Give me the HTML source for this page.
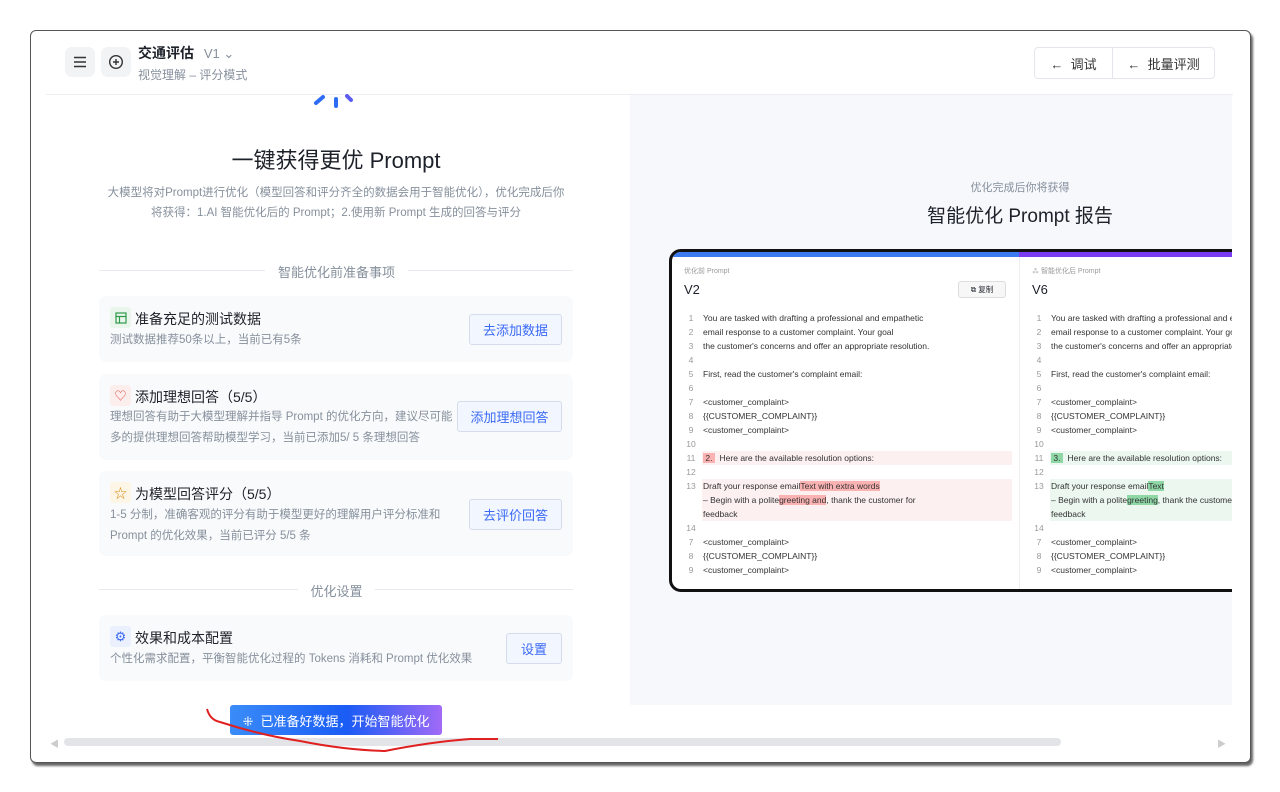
<!DOCTYPE html>
<html><head><meta charset="utf-8"><style>
*{box-sizing:border-box;margin:0;padding:0}
body{width:1280px;height:792px;background:#fff;position:relative;overflow:hidden;font-family:"Liberation Sans","Noto Sans CJK SC",sans-serif;color:#1d2129}
.abs{position:absolute}
.win{left:30px;top:30px;width:1221px;height:733px;border:1.5px solid #555;border-radius:6px;box-shadow:2px 3px 2px #666;background:#fff;overflow:hidden}
.ib{width:30px;height:30px;border-radius:7px;background:#f2f3f5;display:flex;align-items:center;justify-content:center}
.tbtn{height:32px;border:1px solid #e5e6eb;display:flex;align-items:center;justify-content:center;font-size:13px;color:#333;background:#fff}
.card{left:99px;width:474px;background:#f9fafc;border-radius:7px}
.ct{font-size:14px;color:#1d2129;position:absolute;left:36px}
.cd{font-size:11.5px;color:#86909c;position:absolute;left:11px;line-height:21px;white-space:nowrap}
.ico{position:absolute;left:11px;width:21px;height:21px;border-radius:3px;display:flex;align-items:center;justify-content:center}
.btn{position:absolute;right:11px;height:31px;border:1px solid #d6dcec;background:#f2f6ff;border-radius:3px;color:#3b6af5;font-size:13px;display:flex;align-items:center;justify-content:center}
.sec{font-size:13px;color:#86909c;text-align:center}
.ln{position:absolute;height:1px;background:#e8eaef}
.code{font-size:8.5px;color:#333;line-height:14px}
.code div{height:14px;white-space:nowrap;position:relative;padding-left:31px}
.code div span.n{position:absolute;left:14px;width:10px;text-align:center;color:#999}
.hr{background:#fbb2b2}.hg{background:#8fd8a6}
</style></head><body>
<div class="abs win"></div>
<div class="abs ib" style="left:65px;top:47px"><svg width="14" height="12"><path d="M1 1.5h12M1 6h12M1 10.5h12" stroke="#333" stroke-width="1.4"/></svg></div>
<div class="abs ib" style="left:101px;top:47px"><svg width="16" height="16"><circle cx="8" cy="8" r="6.3" fill="none" stroke="#333" stroke-width="1.4"/><path d="M8 5v6M5 8h6" stroke="#333" stroke-width="1.4"/></svg></div>
<div class="abs" style="left:138px;top:43px;font-size:14px;font-weight:bold">交通评估 <span style="font-weight:normal;color:#86909c;font-size:13px;margin-left:6px">V1 ⌄</span></div>
<div class="abs" style="left:138px;top:66px;font-size:12px;color:#86909c">视觉理解 – 评分模式</div>
<div class="abs tbtn" style="left:1034px;top:47px;width:79px;border-radius:4px 0 0 4px">← &nbsp;调试</div>
<div class="abs tbtn" style="left:1112px;top:47px;width:103px;border-radius:0 4px 4px 0">← &nbsp;批量评测</div>
<div class="ln" style="left:46px;top:94px;width:1187px;background:#eceef2"></div>
<div class="abs" style="left:630px;top:95px;width:602px;height:610px;background:#f6f8fc;overflow:hidden">
 <div class="abs" style="left:190px;top:84px;width:400px;text-align:center;font-size:11px;color:#86909c">优化完成后你将获得</div>
 <div class="abs" style="left:190px;top:106px;width:400px;text-align:center;font-size:19px;color:#1d2129">智能优化 Prompt 报告</div>
 <div class="abs" style="left:39px;top:154px;width:600px;height:343px;border:3.5px solid #111;border-radius:12px;background:#fff;overflow:hidden">
 <div class="abs" style="left:0;top:0;width:347px;height:5px;background:#3d7bf0"></div>
 <div class="abs" style="left:347px;top:0;width:260px;height:5px;background:#7a3cf0"></div>
 <div class="abs" style="left:347px;top:5px;width:1px;height:340px;background:#eee"></div>
 <div class="abs" style="left:12px;top:14px;font-size:7px;color:#999">优化前 Prompt</div>
 <div class="abs" style="left:12px;top:30px;font-size:13px">V2</div>
 <div class="abs" style="left:286px;top:29px;width:48px;height:17px;border:1px solid #ddd;border-radius:3px;background:#f7f7f7;font-size:7.5px;display:flex;align-items:center;justify-content:center">⧉ 复制</div>
 <div class="abs" style="left:360px;top:14px;font-size:7px;color:#999">⁂ 智能优化后 Prompt</div>
 <div class="abs" style="left:360px;top:30px;font-size:13px">V6</div>
 <div class="abs code" style="left:0;top:59px;width:340px">
  <div><span class="n">1</span>You are tasked with drafting a professional and empathetic</div>
  <div><span class="n">2</span>email response to a customer complaint. Your goal</div>
  <div><span class="n">3</span>the customer's concerns and offer an appropriate resolution.</div>
  <div><span class="n">4</span></div>
  <div><span class="n">5</span>First, read the customer's complaint email:</div>
  <div><span class="n">6</span></div>
  <div><span class="n">7</span>&lt;customer_complaint&gt;</div>
  <div><span class="n">8</span>{{CUSTOMER_COMPLAINT}}</div>
  <div><span class="n">9</span>&lt;customer_complaint&gt;</div>
  <div><span class="n">10</span></div>
  <div style="background:#fdf0f0;margin-left:30px;padding-left:1px"><span class="n" style="left:-16px">11</span><span class="hr">&nbsp;2.&nbsp;</span>&nbsp; Here are the available resolution options:</div>
  <div><span class="n">12</span></div>
  <div style="background:#fdf0f0;margin-left:30px;padding-left:1px;height:42px"><span class="n" style="left:-16px">13</span>Draft your response email<span class="hr">Text with extra words</span><br>– Begin with a polite<span class="hr">greeting and</span>, thank the customer for<br>feedback</div>
  <div><span class="n">14</span></div>
  <div><span class="n">7</span>&lt;customer_complaint&gt;</div>
  <div><span class="n">8</span>{{CUSTOMER_COMPLAINT}}</div>
  <div><span class="n">9</span>&lt;customer_complaint&gt;</div>
 </div>
 <div class="abs code" style="left:348px;top:59px;width:260px">
  <div><span class="n">1</span>You are tasked with drafting a professional and empathetic</div>
  <div><span class="n">2</span>email response to a customer complaint. Your goal</div>
  <div><span class="n">3</span>the customer's concerns and offer an appropriate resolution.</div>
  <div><span class="n">4</span></div>
  <div><span class="n">5</span>First, read the customer's complaint email:</div>
  <div><span class="n">6</span></div>
  <div><span class="n">7</span>&lt;customer_complaint&gt;</div>
  <div><span class="n">8</span>{{CUSTOMER_COMPLAINT}}</div>
  <div><span class="n">9</span>&lt;customer_complaint&gt;</div>
  <div><span class="n">10</span></div>
  <div style="background:#ecf8ef;margin-left:30px;padding-left:1px"><span class="n" style="left:-16px">11</span><span class="hg">&nbsp;3.&nbsp;</span>&nbsp; Here are the available resolution options:</div>
  <div><span class="n">12</span></div>
  <div style="background:#ecf8ef;margin-left:30px;padding-left:1px;height:42px"><span class="n" style="left:-16px">13</span>Draft your response email<span class="hg">Text</span><br>– Begin with a polite<span class="hg">greeting</span>, thank the customer for<br>feedback</div>
  <div><span class="n">14</span></div>
  <div><span class="n">7</span>&lt;customer_complaint&gt;</div>
  <div><span class="n">8</span>{{CUSTOMER_COMPLAINT}}</div>
  <div><span class="n">9</span>&lt;customer_complaint&gt;</div>
 </div>
 </div>
</div>
<svg class="abs" style="left:310px;top:94px" width="50" height="16"><path d="M6 9l7-6" stroke="#2f6cf6" stroke-width="4" stroke-linecap="round"/><path d="M26 5v7" stroke="#2f6cf6" stroke-width="4" stroke-linecap="round"/><path d="M37 2l4 4" stroke="#5b5cf2" stroke-width="4" stroke-linecap="round"/></svg>
<div class="abs" style="left:99px;top:143px;width:474px;text-align:center;font-size:22px">一键获得更优 Prompt</div>
<div class="abs" style="left:79px;top:183px;width:514px;text-align:center;font-size:11.5px;color:#86909c;line-height:20px;white-space:nowrap">大模型将对Prompt进行优化（模型回答和评分齐全的数据会用于智能优化），优化完成后你<br>将获得：1.AI 智能优化后的 Prompt；2.使用新 Prompt 生成的回答与评分</div>
<div class="ln" style="left:99px;top:270px;width:166px"></div><div class="ln" style="left:408px;top:270px;width:165px"></div>
<div class="abs sec" style="left:265px;top:262px;width:143px">智能优化前准备事项</div>
<div class="abs card" style="top:296px;height:66px">
 <div class="ico" style="top:11px;background:#eaf6ec"><svg width="12" height="12"><rect x="1" y="1" width="10" height="10" fill="none" stroke="#2e9a4a" stroke-width="1.2"/><path d="M1 4.5h10M4.5 4.5v6.5" stroke="#2e9a4a" stroke-width="1.2"/></svg></div>
 <div class="ct" style="top:13px">准备充足的测试数据</div>
 <div class="cd" style="top:34px">测试数据推荐50条以上，当前已有5条</div>
 <div class="btn" style="top:18px;width:93px">去添加数据</div>
</div>
<div class="abs card" style="top:374px;height:86px">
 <div class="ico" style="top:11px;background:#fdeeee;color:#e5534b;font-size:12px">♡</div>
 <div class="ct" style="top:13px">添加理想回答（5/5）</div>
 <div class="cd" style="top:33px">理想回答有助于大模型理解并指导 Prompt 的优化方向，建议尽可能<br>多的提供理想回答帮助模型学习，当前已添加5/ 5 条理想回答</div>
 <div class="btn" style="top:27px;width:105px">添加理想回答</div>
</div>
<div class="abs card" style="top:471px;height:85px">
 <div class="ico" style="top:11px;background:#fdf5e6;color:#d98a0a;font-size:13px">☆</div>
 <div class="ct" style="top:13px">为模型回答评分（5/5）</div>
 <div class="cd" style="top:34px">1-5 分制，准确客观的评分有助于模型更好的理解用户评分标准和<br>Prompt 的优化效果，当前已评分 5/5 条</div>
 <div class="btn" style="top:28px;width:93px">去评价回答</div>
</div>
<div class="ln" style="left:99px;top:589px;width:199px"></div><div class="ln" style="left:375px;top:589px;width:198px"></div>
<div class="abs sec" style="left:298px;top:581px;width:77px">优化设置</div>
<div class="abs card" style="top:615px;height:66px">
 <div class="ico" style="top:11px;background:#eaf0fe;color:#3b6af5;font-size:13px">⚙</div>
 <div class="ct" style="top:13px">效果和成本配置</div>
 <div class="cd" style="top:34px">个性化需求配置，平衡智能优化过程的 Tokens 消耗和 Prompt 优化效果</div>
 <div class="btn" style="top:18px;width:56px">设置</div>
</div>
<div class="abs" style="left:230px;top:705px;width:212px;height:30px;border-radius:3px;background:linear-gradient(90deg,#3a8cf8,#1a5cf5 55%,#a06af6);color:#fff;font-size:13px;display:flex;align-items:center;justify-content:center">⁜&nbsp; 已准备好数据，开始智能优化</div>
<div class="abs" style="left:64px;top:738px;width:997px;height:8px;border-radius:4px;background:#e3e4e8"></div>
<div class="abs" style="left:50px;top:737px;font-size:9px;color:#ccc">◀</div>
<div class="abs" style="left:1217px;top:737px;font-size:9px;color:#ccc">▶</div>
<svg class="abs" style="left:0;top:0" width="1280" height="792"><path d="M207 709 Q210 720 220 722 Q260 735 300 741 Q345 750 385 751 Q430 742 470 739 L498 739" fill="none" stroke="#e02020" stroke-width="2"/></svg>
</body></html>
